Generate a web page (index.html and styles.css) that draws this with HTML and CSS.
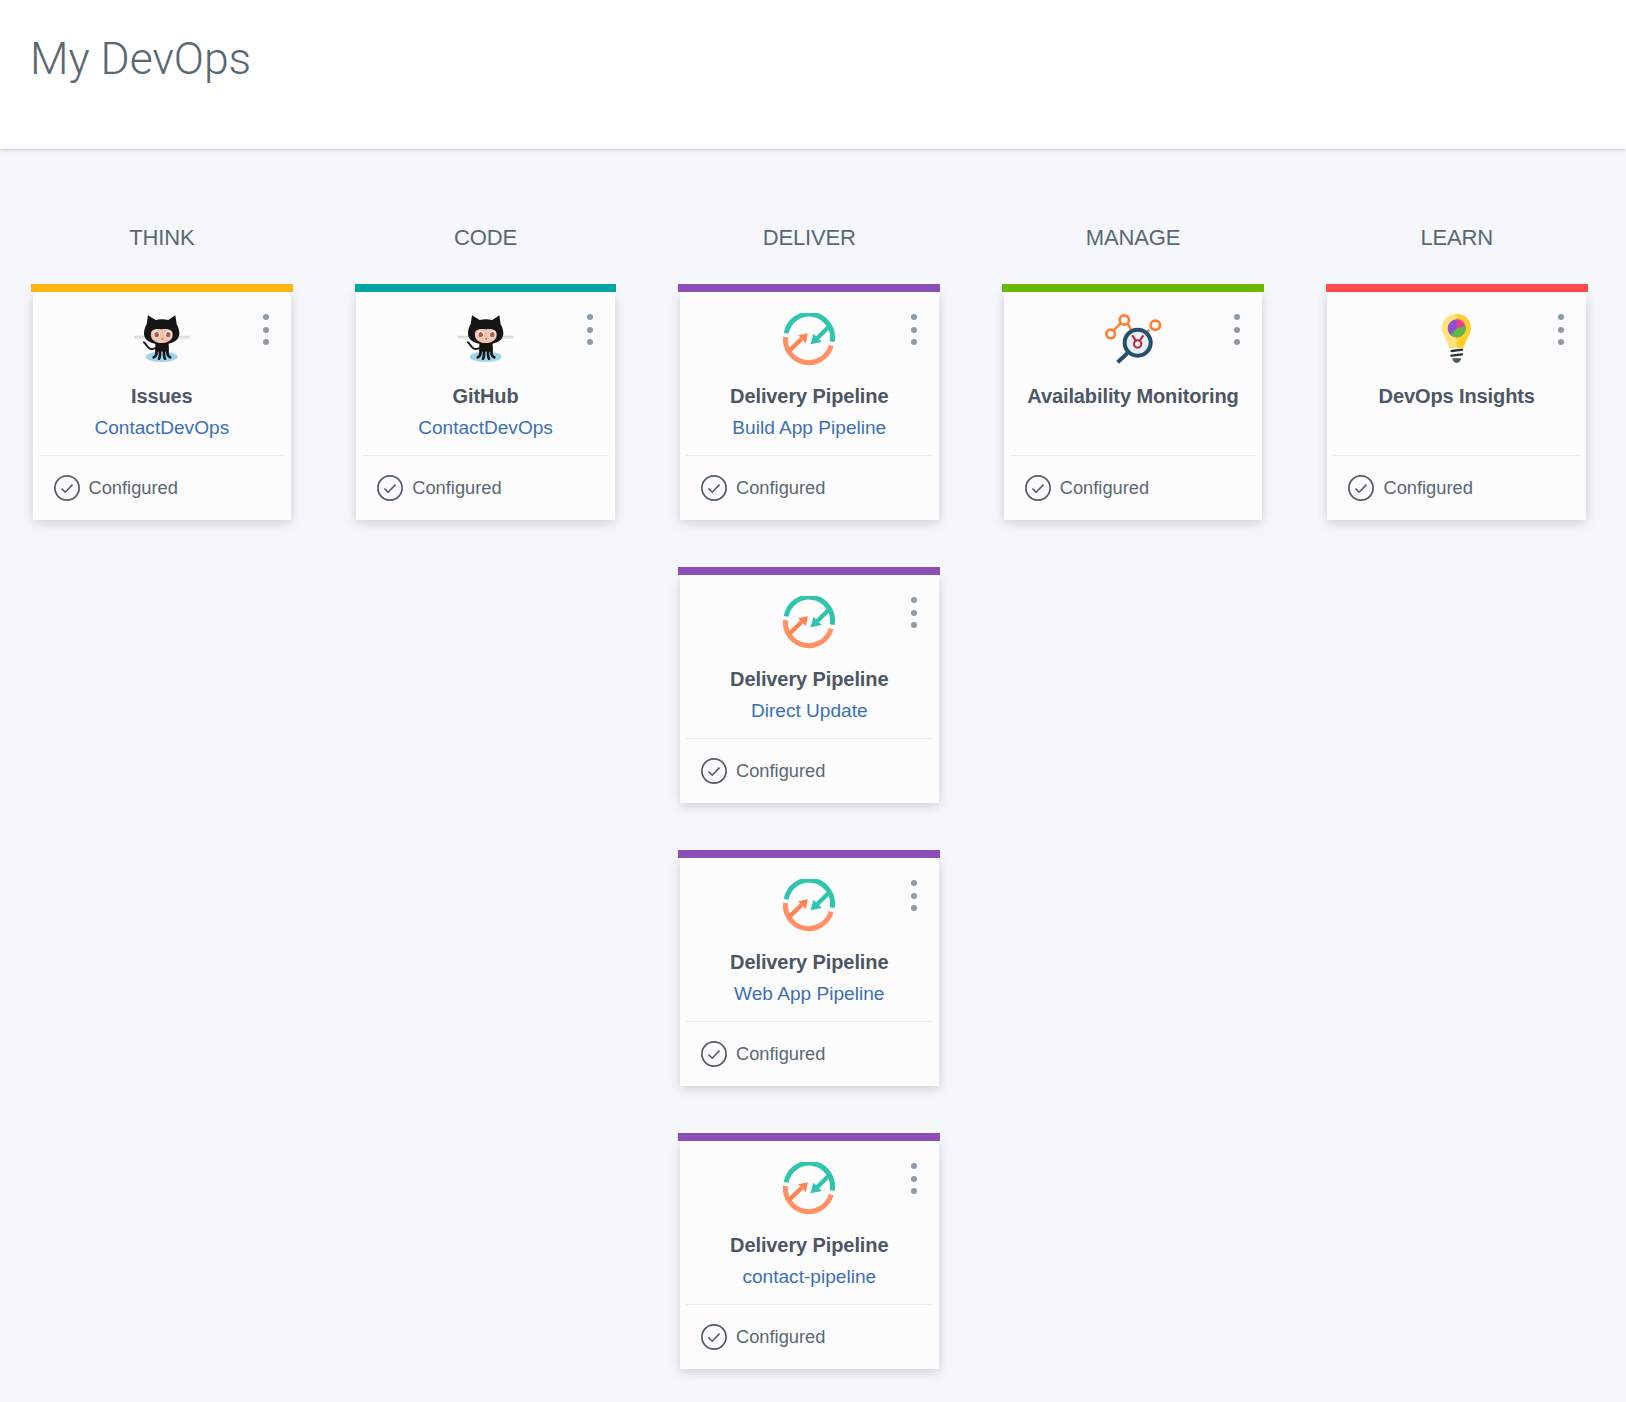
FILE: index.html
```html
<!DOCTYPE html>
<html lang="en">
<head>
<meta charset="utf-8">
<title>My DevOps</title>
<link rel="stylesheet" href="styles.css">
</head>
<body>
<svg class="defs" width="0" height="0" aria-hidden="true">
  <symbol id="ic-octo" viewBox="36 24 180 168">
    <ellipse cx="125" cy="155" rx="48" ry="16" fill="#9fd4ef"/>
    <path d="M42 94h44M42 99h44M165 94h44M165 99h44" stroke="#c9c9c9" stroke-width="2.5" fill="none"/>
    <path d="M72 112c8 6 12 26 32 18" stroke="#1c1c1c" stroke-width="6" fill="none" stroke-linecap="round"/>
    <path d="M106 112h40v28h-40z" fill="#151515"/>
    <path d="M110 128v12c0 8-3 14-9 17M120 128v20c0 6-1 10-3 13M132 128v20c0 6 1 10 3 13M142 128v12c0 8 3 14 9 17" stroke="#151515" stroke-width="8" fill="none" stroke-linecap="round"/>
    <path d="M84 31l23 14c12-3 26-3 38 0l21-14 4 27c5 8 8 18 8 27 0 20-18 33-53 33s-53-13-53-33c0-9 3-19 8-27z" fill="#151515"/>
    <path d="M93 92c-3-18 11-23 32-19 21-4 35 1 33 19-2 15-18 22-33 22s-31-7-32-22z" fill="#f3c3ac"/>
    <ellipse cx="110" cy="88" rx="10" ry="11" fill="#fff"/><ellipse cx="145" cy="88" rx="10" ry="11" fill="#fff"/>
    <ellipse cx="110" cy="89" rx="7" ry="8" fill="#ad5c50"/><ellipse cx="145" cy="89" rx="7" ry="8" fill="#ad5c50"/>
    <circle cx="127" cy="101" r="2.5" fill="#a8685a"/>
  </symbol>
  <symbol id="ic-pipe" viewBox="118.5 69 180 168">
    <path d="M140 130A70 70 0 0 1 278 155" fill="none" stroke="#2ec4ae" stroke-width="15"/>
    <path d="M138 141A70 70 0 0 0 275 167" fill="none" stroke="#ff9164" stroke-width="15"/>
    <path d="M268 110L230 148" stroke="#2ec4ae" stroke-width="13" fill="none"/>
    <path d="M213 163L222 131L247 156z" fill="#2ec4ae"/>
    <path d="M150 182L186 147" stroke="#ff8350" stroke-width="13" fill="none"/>
    <path d="M205 130L176 136L199 160z" fill="#ff8350"/>
  </symbol>
  <symbol id="ic-avail" viewBox="69 39 180 168">
    <path d="M100 92L122 70M143 70L153 90M208 90L196 99" stroke="#ff7f2f" stroke-width="7" fill="none"/>
    <circle cx="92" cy="102" r="13" fill="#fff" stroke="#ff7f2f" stroke-width="8"/>
    <circle cx="133" cy="60" r="14" fill="#fff" stroke="#ff7f2f" stroke-width="8"/>
    <circle cx="226" cy="76" r="14" fill="#fff" stroke="#ff7f2f" stroke-width="8"/>
    <path d="M142 160L113 187" stroke="#264f6a" stroke-width="12" fill="none"/>
    <circle cx="173" cy="128" r="39" fill="#e3f2fb" stroke="#264f6a" stroke-width="12"/>
    <circle cx="173" cy="132" r="11" fill="none" stroke="#c0212f" stroke-width="6"/>
    <path d="M157 106L167 121M190 106L180 121" stroke="#c0212f" stroke-width="6" fill="none"/>
  </symbol>
  <symbol id="ic-bulb" viewBox="51 39 180 168">
    <path d="M140 42C113 42 97 62 97 85C97 105 113 118 118 143H162C167 118 183 105 183 85C183 62 167 42 140 42z" fill="#ffcf2e"/>
    <path d="M140 42C113 42 97 62 97 85C97 105 113 118 118 143H140z" fill="#ffe27a"/>
    <circle cx="140" cy="85" r="27" fill="#8e4fd0"/>
    <path d="M140 85V58A27 27 0 0 1 166 78z" fill="#ee3f98"/>
    <path d="M140 85L166 78A27 27 0 0 1 122 105z" fill="#5fb84a"/>
    <path d="M125 153L156 149M124 167L156 163" stroke="#2d3436" stroke-width="7" stroke-linecap="round" fill="none"/>
    <path d="M127 175H153C153 183 147 189 140 189S127 183 127 175z" fill="#4a5c5f"/>
  </symbol>
  <symbol id="ic-check" viewBox="0 0 26 26">
    <circle cx="13" cy="13" r="12.1" fill="none" stroke="#4f5b66" stroke-width="1.7"/>
    <path d="M7.5 13.5l3.7 3.7 7.3-7.6" fill="none" stroke="#4f5b66" stroke-width="1.6"/>
  </symbol>
</svg>

<header class="page-header">
  <h1 class="page-title">My DevOps</h1>
</header>

<main class="board">
  <section class="col">
    <h2 class="col-title">THINK</h2>
    <article class="card accent-think">
      <div class="card-body">
        <span class="kebab"><i></i><i></i><i></i></span>
        <svg class="card-icon"><use href="#ic-octo"/></svg>
        <div class="card-name">Issues</div>
        <a class="card-link">ContactDevOps</a>
      </div>
      <div class="card-status"><svg class="check"><use href="#ic-check"/></svg>Configured</div>
    </article>
  </section>

  <section class="col">
    <h2 class="col-title">CODE</h2>
    <article class="card accent-code">
      <div class="card-body">
        <span class="kebab"><i></i><i></i><i></i></span>
        <svg class="card-icon"><use href="#ic-octo"/></svg>
        <div class="card-name">GitHub</div>
        <a class="card-link">ContactDevOps</a>
      </div>
      <div class="card-status"><svg class="check"><use href="#ic-check"/></svg>Configured</div>
    </article>
  </section>

  <section class="col">
    <h2 class="col-title">DELIVER</h2>
    <article class="card accent-deliver">
      <div class="card-body">
        <span class="kebab"><i></i><i></i><i></i></span>
        <svg class="card-icon"><use href="#ic-pipe"/></svg>
        <div class="card-name">Delivery Pipeline</div>
        <a class="card-link">Build App Pipeline</a>
      </div>
      <div class="card-status"><svg class="check"><use href="#ic-check"/></svg>Configured</div>
    </article>
    <article class="card accent-deliver">
      <div class="card-body">
        <span class="kebab"><i></i><i></i><i></i></span>
        <svg class="card-icon"><use href="#ic-pipe"/></svg>
        <div class="card-name">Delivery Pipeline</div>
        <a class="card-link">Direct Update</a>
      </div>
      <div class="card-status"><svg class="check"><use href="#ic-check"/></svg>Configured</div>
    </article>
    <article class="card accent-deliver">
      <div class="card-body">
        <span class="kebab"><i></i><i></i><i></i></span>
        <svg class="card-icon"><use href="#ic-pipe"/></svg>
        <div class="card-name">Delivery Pipeline</div>
        <a class="card-link">Web App Pipeline</a>
      </div>
      <div class="card-status"><svg class="check"><use href="#ic-check"/></svg>Configured</div>
    </article>
    <article class="card accent-deliver">
      <div class="card-body">
        <span class="kebab"><i></i><i></i><i></i></span>
        <svg class="card-icon"><use href="#ic-pipe"/></svg>
        <div class="card-name">Delivery Pipeline</div>
        <a class="card-link">contact-pipeline</a>
      </div>
      <div class="card-status"><svg class="check"><use href="#ic-check"/></svg>Configured</div>
    </article>
  </section>

  <section class="col">
    <h2 class="col-title">MANAGE</h2>
    <article class="card accent-manage">
      <div class="card-body">
        <span class="kebab"><i></i><i></i><i></i></span>
        <svg class="card-icon"><use href="#ic-avail"/></svg>
        <div class="card-name">Availability Monitoring</div>
      </div>
      <div class="card-status"><svg class="check"><use href="#ic-check"/></svg>Configured</div>
    </article>
  </section>

  <section class="col">
    <h2 class="col-title">LEARN</h2>
    <article class="card accent-learn">
      <div class="card-body">
        <span class="kebab"><i></i><i></i><i></i></span>
        <svg class="card-icon"><use href="#ic-bulb"/></svg>
        <div class="card-name">DevOps Insights</div>
      </div>
      <div class="card-status"><svg class="check"><use href="#ic-check"/></svg>Configured</div>
    </article>
  </section>
</main>
</body>
</html>
```

FILE: styles.css
```css
* { box-sizing: border-box; }
html, body { margin: 0; padding: 0; }
body {
  background: #f5f7fa;
  font-family: "Liberation Sans", Arial, sans-serif;
  color: #4d5664;
  height: 1402px;
  overflow: hidden;
}
.defs { position: absolute; }

.page-header {
  height: 149px;
  background: #fff;
  box-shadow: 0 1px 3px rgba(60, 70, 90, .25);
  padding: 32px 30px 0;
}
.page-title {
  margin: 0;
  font-family: Roboto, "Liberation Sans", sans-serif;
  font-weight: 300;
  font-size: 44.5px;
  line-height: 54px;
  color: #5a6872;
}

.board {
  display: grid;
  grid-template-columns: repeat(5, 261.6px);
  column-gap: 62.15px;
  padding: 72px 0 0 31px;
}
.col { display: flex; flex-direction: column; gap: 47px; }
.col-title {
  margin: 0 0 -19px;
  height: 35px;
  text-align: center;
  font-size: 22px;
  line-height: 34px;
  font-weight: 400;
  color: #5a6872;
  letter-spacing: -.15px;
}

.card { display: flex; flex-direction: column; height: 236px; border-top: 8px solid; position: relative; }
.card::after {
  content: "";
  position: absolute;
  inset: 0 1.5px;
  background: #fcfcfc;
  box-shadow: 0 3px 10px rgba(60, 70, 90, .22);
  z-index: -1;
}
.accent-think { border-color: #ffb612; }
.accent-code { border-color: #00a69f; }
.accent-deliver { border-color: #8c4fb8; }
.accent-manage { border-color: #6bb700; }
.accent-learn { border-color: #ff4b4b; }

.card-body {
  position: relative;
  height: 164px;
  margin: 0 7.5px;
  padding-top: 21px;
  border-bottom: 1px solid #ececec;
  text-align: center;
}
.card-icon { display: block; width: 60px; height: 56px; margin: 0 auto 12px; }
.card-name { font-size: 20px; line-height: 30px; font-weight: 700; letter-spacing: -.1px; color: #4d5664; }
.card-link { display: block; font-size: 19.1px; line-height: 30px; color: #3d70b2; margin-top: 2px; }

.kebab { position: absolute; top: 22px; right: 16px; display: flex; flex-direction: column; gap: 6.5px; }
.kebab i { display: block; width: 6px; height: 6px; border-radius: 50%; background: #8c9ba5; }

.card-status {
  flex: 1;
  display: flex;
  align-items: center;
  gap: 9px;
  padding-left: 22.5px;
  font-size: 18.3px;
  color: #5a6872;
}
.check { width: 26px; height: 26px; flex: none; }
```
